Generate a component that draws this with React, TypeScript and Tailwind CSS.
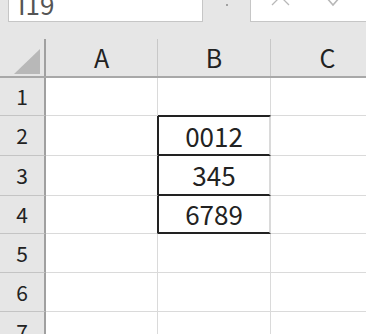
import React from "react";

type Row = { n: string; h: string; v: string; a: string; b: string };

const rows: Row[] = [
  { n: "1", h: "h-[38px]", v: "", a: "border-r-[#dadada]", b: "border-b border-b-[#222]" },
  { n: "2", h: "h-[40px]", v: "0012", a: "border-r-[#222]", b: "border-t border-t-[#222] border-l border-l-[#222] border-r-2 border-r-[#222] border-b-2 border-b-[#222]" },
  { n: "3", h: "h-[40px]", v: "345", a: "border-r-[#222]", b: "border-l border-l-[#222] border-r-2 border-r-[#222] border-b-2 border-b-[#222]" },
  { n: "4", h: "h-[38px]", v: "6789", a: "border-r-[#222]", b: "border-l border-l-[#222] border-r-2 border-r-[#222] border-b-2 border-b-[#222]" },
  { n: "5", h: "h-[39px]", v: "", a: "border-r-[#dadada]", b: "border-b border-b-[#dadada]" },
  { n: "6", h: "h-[39px]", v: "", a: "border-r-[#dadada]", b: "border-b border-b-[#dadada]" },
  { n: "7", h: "h-[40px]", v: "", a: "border-r-[#dadada]", b: "border-b border-b-[#dadada]" },
];

export default function App() {
  return (
    <div className="w-[366px] h-[334px] overflow-hidden bg-[#e6e6e6] font-['Noto_Sans_CJK_JP','Noto_Sans',sans-serif] text-[#222]">
      {/* formula bar */}
      <div className="flex h-[22px]">
        <div className="ml-[8px] w-[202px] h-[22px] bg-white border-x border-b border-[#c6c6c6] overflow-hidden pl-[9px]">
          <div className="-mt-[10px] text-[26px] leading-[28px] text-[#555]">I19</div>
        </div>
        <div className="w-[49px] flex justify-center pt-[4px]">
          <div className="w-[2px] h-[2px] bg-[#8a8a8a] rounded-full" />
        </div>
        <div className="w-[120px] h-[22px] bg-white border-l border-b border-[#c6c6c6] overflow-hidden relative flex">
          <svg width="20" height="22" viewBox="0 0 20 22" className="ml-[20px]">
            <path d="M1 -12 L18 5 M18 -12 L1 5" stroke="#b8b8b8" strokeWidth="1.3" fill="none" />
          </svg>
          <svg width="20" height="22" viewBox="0 0 20 22" className="ml-[34px]">
            <path d="M1 -3 L8 5 L15 -3" stroke="#b8b8b8" strokeWidth="1.6" fill="none" />
          </svg>
        </div>
      </div>
      <div className="h-[17px]" />
      {/* column header */}
      <div className="flex h-[39px] border-b-2 border-b-[#a8a8a8]">
        <div className="w-[46px] shrink-0 border-r-2 border-r-[#a0a0a0] flex items-end justify-end pr-[4px] pb-[2px]">
          <svg width="26" height="25" viewBox="0 0 26 25">
            <path d="M26 0 L26 25 L0 25 Z" fill="#b8b8b8" />
          </svg>
        </div>
        <div className="w-[112px] shrink-0 border-r border-r-[#c8c8c8] flex items-center justify-center text-[25px] leading-none">A</div>
        <div className="w-[113px] shrink-0 border-r border-r-[#c8c8c8] flex items-center justify-center text-[25px] leading-none">B</div>
        <div className="w-[113px] shrink-0 flex items-center justify-center text-[25px] leading-none">C</div>
      </div>
      {/* rows */}
      {rows.map((r) => (
        <div key={r.n} className={`flex ${r.h}`}>
          <div className="w-[46px] shrink-0 border-r-2 border-r-[#a0a0a0] border-b border-b-[#c4c4c4] flex items-center justify-center text-[21px] leading-none">
            {r.n}
          </div>
          <div className={`w-[112px] shrink-0 bg-white border-r border-b border-b-[#dadada] ${r.a}`} />
          <div className={`w-[113px] shrink-0 bg-white border-r border-r-[#dadada] flex items-center justify-center text-[26px] leading-none ${r.b}`}>
            {r.v}
          </div>
          <div className="w-[113px] shrink-0 bg-white border-r border-b border-[#dadada]" />
        </div>
      ))}
    </div>
  );
}
